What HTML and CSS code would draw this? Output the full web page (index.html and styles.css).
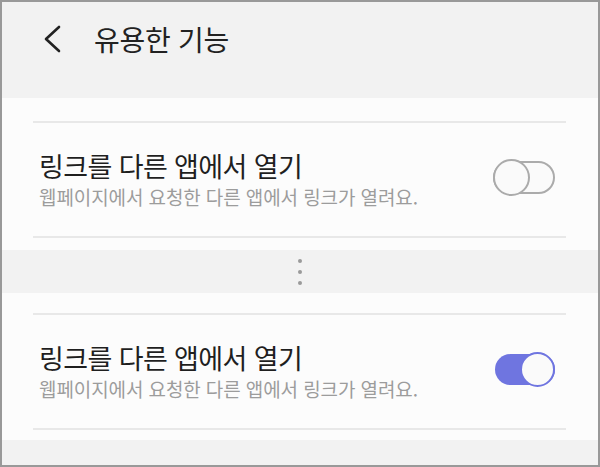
FILE: index.html
```html
<!DOCTYPE html>
<html lang="ko">
<head>
    <meta charset="UTF-8">
    <meta name="viewport" content="width=device-width, initial-scale=1.0">
    <title>유용한 기능</title>
    <link rel="stylesheet" href="styles.css">
</head>
<body>
    <div class="frame">
        <div class="header">
            <svg class="back" width="18" height="28" viewBox="0 0 18 28">
                <polyline points="16,2 3,14 16,26" fill="none" stroke="#222" stroke-width="2.6" stroke-linecap="round" stroke-linejoin="round"/>
            </svg>
            <h1 class="title">유용한 기능</h1>
        </div>

        <div class="section first">
            <div class="item">
                <div class="text">
                    <div class="item-title">링크를 다른 앱에서 열기</div>
                    <div class="item-sub">웹페이지에서 요청한 다른 앱에서 링크가 열려요.</div>
                </div>
                <div class="toggle off">
                    <span class="track"></span>
                    <span class="knob"></span>
                </div>
            </div>
        </div>

        <div class="more">
            <span class="dot"></span>
            <span class="dot"></span>
            <span class="dot"></span>
        </div>

        <div class="section second">
            <div class="item">
                <div class="text">
                    <div class="item-title">링크를 다른 앱에서 열기</div>
                    <div class="item-sub">웹페이지에서 요청한 다른 앱에서 링크가 열려요.</div>
                </div>
                <div class="toggle on">
                    <span class="track"></span>
                    <span class="knob"></span>
                </div>
            </div>
        </div>
    </div>
</body>
</html>
```

FILE: styles.css
```css
/* Global */
body {
    margin: 0;
    padding: 0;
    font-family: "Noto Sans CJK KR", "Noto Sans", sans-serif;
    color: #222;
}

.frame {
    width: 600px;
    height: 467px;
    box-sizing: border-box;
    border: 2px solid #999;
    background-color: #f2f2f2;
    display: flex;
    flex-direction: column;
}

/* Header */
.header {
    height: 96px;
    flex-shrink: 0;
    display: flex;
    align-items: flex-start;
    padding: 20px 0 0 41px;
    box-sizing: border-box;
}

.back {
    margin-top: 3px;
}

.title {
    margin: 0 0 0 33px;
    font-size: 28px;
    font-weight: 400;
    line-height: 34px;
    letter-spacing: -0.3px;
}

/* Sections */
.section {
    background-color: #fcfcfc;
    padding: 0 32px 0 31px;
    flex-shrink: 0;
}

.section.first {
    padding-top: 23px;
    padding-bottom: 12px;
}

.section.second {
    padding-top: 20px;
    padding-bottom: 10px;
}

.item {
    height: 117px;
    box-sizing: border-box;
    border-top: 2px solid #e8e8e8;
    border-bottom: 2px solid #e8e8e8;
    display: flex;
    align-items: center;
    justify-content: space-between;
    padding: 0 11px 0 6px;
}

.item-title {
    font-size: 27px;
    line-height: 34px;
    letter-spacing: -0.6px;
    color: #1f1f1f;
}

.item-sub {
    font-size: 19px;
    line-height: 26px;
    letter-spacing: -0.1px;
    color: #9c9c9c;
    margin-top: 1px;
}

/* Toggle */
.toggle {
    position: relative;
    width: 62px;
    height: 37px;
    margin-top: -4px;
}

.toggle .track {
    position: absolute;
    left: 0;
    right: 0;
    top: 2px;
    bottom: 2px;
    border-radius: 17px;
    box-sizing: border-box;
}

.toggle .knob {
    position: absolute;
    top: 0;
    width: 37px;
    height: 37px;
    border-radius: 50%;
    box-sizing: border-box;
    background-color: #fafafa;
}

.toggle.off .track {
    border: 2px solid #ababab;
    background-color: #fafafa;
}

.toggle.off .knob {
    left: 0;
    border: 2px solid #ababab;
}

.toggle.on .track {
    left: 2px;
    top: 3px;
    bottom: 3px;
    background-color: #6f75e0;
}

.toggle.on .knob {
    right: 0;
    top: 1px;
    width: 35px;
    height: 35px;
    border: 2px solid #6f75e0;
}

/* Divider band with dots */
.more {
    height: 43px;
    flex-shrink: 0;
    display: flex;
    flex-direction: column;
    align-items: center;
    justify-content: center;
    gap: 7px;
}

.dot {
    width: 4px;
    height: 4px;
    border-radius: 50%;
    background-color: #9a9a9a;
}
```
